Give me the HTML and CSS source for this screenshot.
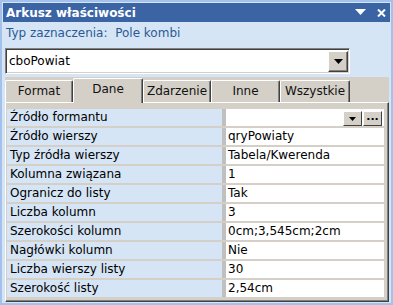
FILE: index.html
```html
<!DOCTYPE html>
<html>
<head>
  <title>Arkusz właściwości</title>
  <link rel="stylesheet" href="styles.css">
</head>
<body>

<div class="window">
  <div class="titlebar">
    <span class="title">Arkusz właściwości</span>
    <span class="title-ctrls">
      <svg class="ctrl-menu" width="11" height="6" viewBox="0 0 11 6"><polygon points="0,0 11,0 5.5,6" fill="#fff"/></svg>
      <svg class="ctrl-close" width="9" height="8" viewBox="0 0 9 8"><path d="M1 0.5 L8 7.5 M8 0.5 L1 7.5" stroke="#fff" stroke-width="2"/></svg>
    </span>
  </div>

  <div class="sel-type">Typ zaznaczenia:&nbsp; Pole kombi</div>

  <div class="combo">
    <div class="combo-text">cboPowiat</div>
    <div class="combo-btn">
      <svg width="9" height="5" viewBox="0 0 9 5"><polygon points="0,0 9,0 4.5,5" fill="#000"/></svg>
    </div>
  </div>

  <div class="panel">
    <div class="tabstrip">
      <div class="tab tab-format">Format</div>
      <div class="tab tab-dane active">Dane</div>
      <div class="tab tab-zdarzenie">Zdarzenie</div>
      <div class="tab tab-inne">Inne</div>
      <div class="tab tab-wszystkie">Wszystkie</div>
    </div>

    <div class="tabbody">
      <div class="row">
        <div class="label">Źródło formantu</div>
        <div class="value value-tools">
          <span class="cell-btn"><svg width="7" height="4" viewBox="0 0 7 4"><polygon points="0,0 7,0 3.5,4" fill="#000"/></svg></span>
          <span class="cell-btn dots">...</span>
        </div>
      </div>
      <div class="row"><div class="label">Źródło wierszy</div><div class="value">qryPowiaty</div></div>
      <div class="row"><div class="label">Typ źródła wierszy</div><div class="value">Tabela/Kwerenda</div></div>
      <div class="row"><div class="label">Kolumna związana</div><div class="value">1</div></div>
      <div class="row"><div class="label">Ogranicz do listy</div><div class="value">Tak</div></div>
      <div class="row"><div class="label">Liczba kolumn</div><div class="value">3</div></div>
      <div class="row"><div class="label">Szerokości kolumn</div><div class="value">0cm;3,545cm;2cm</div></div>
      <div class="row"><div class="label">Nagłówki kolumn</div><div class="value">Nie</div></div>
      <div class="row"><div class="label">Liczba wierszy listy</div><div class="value">30</div></div>
      <div class="row"><div class="label">Szerokość listy</div><div class="value">2,54cm</div></div>
    </div>
  </div>
</div>

</body>
</html>
```

FILE: styles.css
```css
/* Property sheet window */
* {
  box-sizing: border-box;
}
body {
  margin: 0;
  font-family: "DejaVu Sans", Verdana, sans-serif;
  font-size: 12px;
}
.window {
  width: 393px;
  height: 305px;
  border: 2px solid #a3c1ea;
  padding: 1px;
  background: #d6e5f5;
  display: flex;
  flex-direction: column;
}
.titlebar {
  height: 19px;
  flex: none;
  background: #3a64a3;
  color: #fff;
  font-weight: bold;
  font-size: 12px;
  display: flex;
  align-items: center;
  padding: 0 4px 0 3px;
}
.title {
  flex: 1;
}
.title-ctrls {
  display: flex;
  align-items: center;
  gap: 11px;
}
.ctrl-menu {
  margin-top: -2px;
}
.ctrl-close {
  margin-top: 1px;
}
.sel-type {
  height: 24px;
  flex: none;
  line-height: 23px;
  padding-left: 3px;
  color: #2a5a96;
}

/* Combo box with the control name */
.combo {
  flex: none;
  margin: 2px 0 0 2px;
  width: 345px;
  height: 26px;
  display: flex;
  align-items: center;
  background: #fff;
  border: 1px solid;
  border-color: #808080 #fff #fff #808080;
  box-shadow: inset 1px 1px #404040, inset -1px -1px #d4d0c8;
}
.combo-text {
  flex: 1;
  padding-left: 3px;
}
.combo-btn {
  width: 20px;
  height: 21px;
  margin-right: 1px;
  background: #d4d0c8;
  border: 1px solid;
  border-color: #fff #404040 #404040 #fff;
  box-shadow: inset -1px -1px #808080;
  display: flex;
  align-items: center;
  justify-content: center;
}

/* Tabs */
.panel {
  flex: 1;
  margin: 3px 1px 0 2px;
  background: #d4d0c8;
  display: flex;
  flex-direction: column;
}
.tabstrip {
  height: 25px;
  flex: none;
  display: flex;
  align-items: flex-end;
}
.tab {
  height: 22px;
  border-top: 1px solid #fff;
  border-left: 1px solid #fff;
  border-right: 1px solid #404040;
  border-radius: 2px 2px 0 0;
  box-shadow: inset -1px 0 #808080;
  text-align: center;
  line-height: 21px;
  color: #111;
}
.tab.active {
  height: 25px;
  margin-bottom: -1px;
  line-height: 20px;
  position: relative;
  background: #d4d0c8;
}
.tab-format { width: 68px; }
.tab-dane { width: 70px; }
.tab-zdarzenie { width: 68px; }
.tab-inne { width: 69px; }
.tab-wszystkie { width: 70px; }

/* Property grid */
.tabbody {
  flex: 1;
  border: 1px solid;
  border-color: #fff #404040 #404040 #fff;
  box-shadow: inset -1px -1px #808080;
  padding: 6px 4px 0 1px;
}
.row {
  display: grid;
  grid-template-columns: 215px 158px;
  column-gap: 4px;
  height: 17px;
  margin-bottom: 2px;
  background: #c0c0c0;
}
.label {
  background: #d6e5f5;
  padding-left: 3px;
  line-height: 17px;
  color: #000;
}
.value {
  background: #fff;
  padding-left: 2px;
  line-height: 17px;
  color: #000;
}
.value-tools {
  display: flex;
  justify-content: flex-end;
  align-items: flex-start;
  padding-top: 2px;
  padding-right: 2px;
}
.cell-btn {
  width: 19px;
  height: 15px;
  background: #d4d0c8;
  border: 1px solid;
  border-color: #fff #404040 #404040 #fff;
  display: flex;
  align-items: center;
  justify-content: center;
  font-weight: bold;
  font-size: 11px;
  line-height: 8px;
}
.cell-btn.dots {
  margin-left: 1px;
  padding-bottom: 4px;
}
```
